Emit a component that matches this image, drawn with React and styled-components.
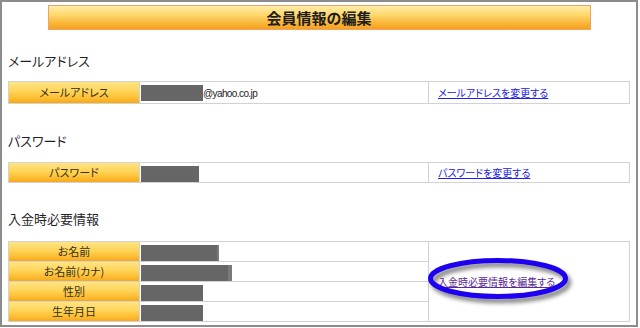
import React from 'react';
import styled, { createGlobalStyle } from 'styled-components';

const GlobalStyle = createGlobalStyle`
  html, body { margin: 0; padding: 0; background: #fff; }
  body { font-family: "Noto Sans CJK JP", "Noto Sans", sans-serif; color: #222; }
`;

const Frame = styled.div`
  box-sizing: border-box;
  width: 638px;
  height: 327px;
  border: 2px solid #8c8c8c;
  padding: 3px 6px 0 6px;
  overflow: hidden;
  background: #fff;
`;

const TitleBar = styled.h1`
  box-sizing: border-box;
  width: 543px;
  height: 25px;
  margin: 0 auto;
  border: 1px solid #eba36b;
  background: linear-gradient(#ffeda8 0%, #fed76b 40%, #fab538 75%, #f69f1a 100%);
  font-size: 15px;
  font-weight: bold;
  line-height: 23px;
  text-align: center;
  color: #1e1e1e;
  font-feature-settings: "palt";
`;

const Heading = styled.h2`
  margin: ${p => p.$top}px 0 ${p => p.$bottom}px 0;
  font-size: 13px;
  font-weight: normal;
  line-height: 20px;
  color: #1f1f2a;
  font-feature-settings: "palt";
`;

const Table = styled.table`
  width: 622px;
  table-layout: fixed;
  border-collapse: separate;
  border-spacing: 1px;
  background: #d2d2d2;
`;

const LabelCell = styled.td`
  width: 130px;
  height: 19px;
  padding: 0;
  background: linear-gradient(#ffe486 0%, #ffd457 45%, #fdbf34 75%, #f9a71a 100%);
  text-align: center;
  vertical-align: middle;
  font-size: 11px;
  line-height: 19px;
  color: #33301e;
  font-feature-settings: "palt";
`;

const ValueCell = styled.td`
  width: 287px;
  height: 19px;
  padding: 0 0 0 1px;
  background: #fff;
  vertical-align: middle;
  font-size: 11px;
  line-height: 19px;
  white-space: nowrap;
`;

const LinkCell = styled.td`
  position: relative;
  width: 191px;
  padding: 0 0 0 9px;
  background: #fff;
  vertical-align: middle;
  font-size: 10px;
  line-height: 19px;
  font-feature-settings: "palt";
`;

const Redacted = styled.span`
  display: inline-block;
  box-sizing: border-box;
  height: 16px;
  vertical-align: middle;
  background: #666;
  border-right: ${p => p.$edge || 0}px solid #7a7a7a;
`;

const Email = styled.span`
  font-family: "Liberation Sans", Arial, sans-serif;
  font-size: 10px;
  letter-spacing: -0.6px;
  color: #222;
  vertical-align: middle;
`;

const Link = styled.a`
  color: ${p => (p.$visited ? '#5a2a95' : '#2020e8')};
  text-decoration: underline;
  cursor: pointer;
`;

const Marker = styled.svg`
  position: absolute;
  left: -2px;
  top: 14px;
  overflow: visible;
  pointer-events: none;
  filter: drop-shadow(3px 4px 2px rgba(0, 0, 0, 0.5));
`;

export default function App() {
  return (
    <>
      <GlobalStyle />
      <Frame>
        <TitleBar>会員情報の編集</TitleBar>

        <Heading $top={21} $bottom={10}>メールアドレス</Heading>
        <Table>
          <tbody>
            <tr>
              <LabelCell>メールアドレス</LabelCell>
              <ValueCell>
                <Redacted style={{ width: 62 }} />
                <Email>@yahoo.co.jp</Email>
              </ValueCell>
              <LinkCell>
                <Link>メールアドレスを変更する</Link>
              </LinkCell>
            </tr>
          </tbody>
        </Table>

        <Heading $top={27} $bottom={11}>パスワード</Heading>
        <Table>
          <tbody>
            <tr>
              <LabelCell>パスワード</LabelCell>
              <ValueCell>
                <Redacted style={{ width: 58 }} />
              </ValueCell>
              <LinkCell>
                <Link>パスワードを変更する</Link>
              </LinkCell>
            </tr>
          </tbody>
        </Table>

        <Heading $top={26} $bottom={12}>入金時必要情報</Heading>
        <Table>
          <tbody>
            <tr>
              <LabelCell>お名前</LabelCell>
              <ValueCell>
                <Redacted style={{ width: 78 }} $edge={2} />
              </ValueCell>
              <LinkCell rowSpan={4}>
                <Link $visited>入金時必要情報を編集する</Link>
                <Marker width="146" height="46" viewBox="0 0 146 46">
                  <ellipse cx="71" cy="22.5" rx="67.5" ry="18" fill="none" stroke="#1d00f2" strokeWidth="5" />
                </Marker>
              </LinkCell>
            </tr>
            <tr>
              <LabelCell>お名前(カナ)</LabelCell>
              <ValueCell>
                <Redacted style={{ width: 91 }} $edge={4} />
              </ValueCell>
            </tr>
            <tr>
              <LabelCell>性別</LabelCell>
              <ValueCell>
                <Redacted style={{ width: 62 }} />
              </ValueCell>
            </tr>
            <tr>
              <LabelCell>生年月日</LabelCell>
              <ValueCell>
                <Redacted style={{ width: 62 }} />
              </ValueCell>
            </tr>
          </tbody>
        </Table>
      </Frame>
    </>
  );
}
